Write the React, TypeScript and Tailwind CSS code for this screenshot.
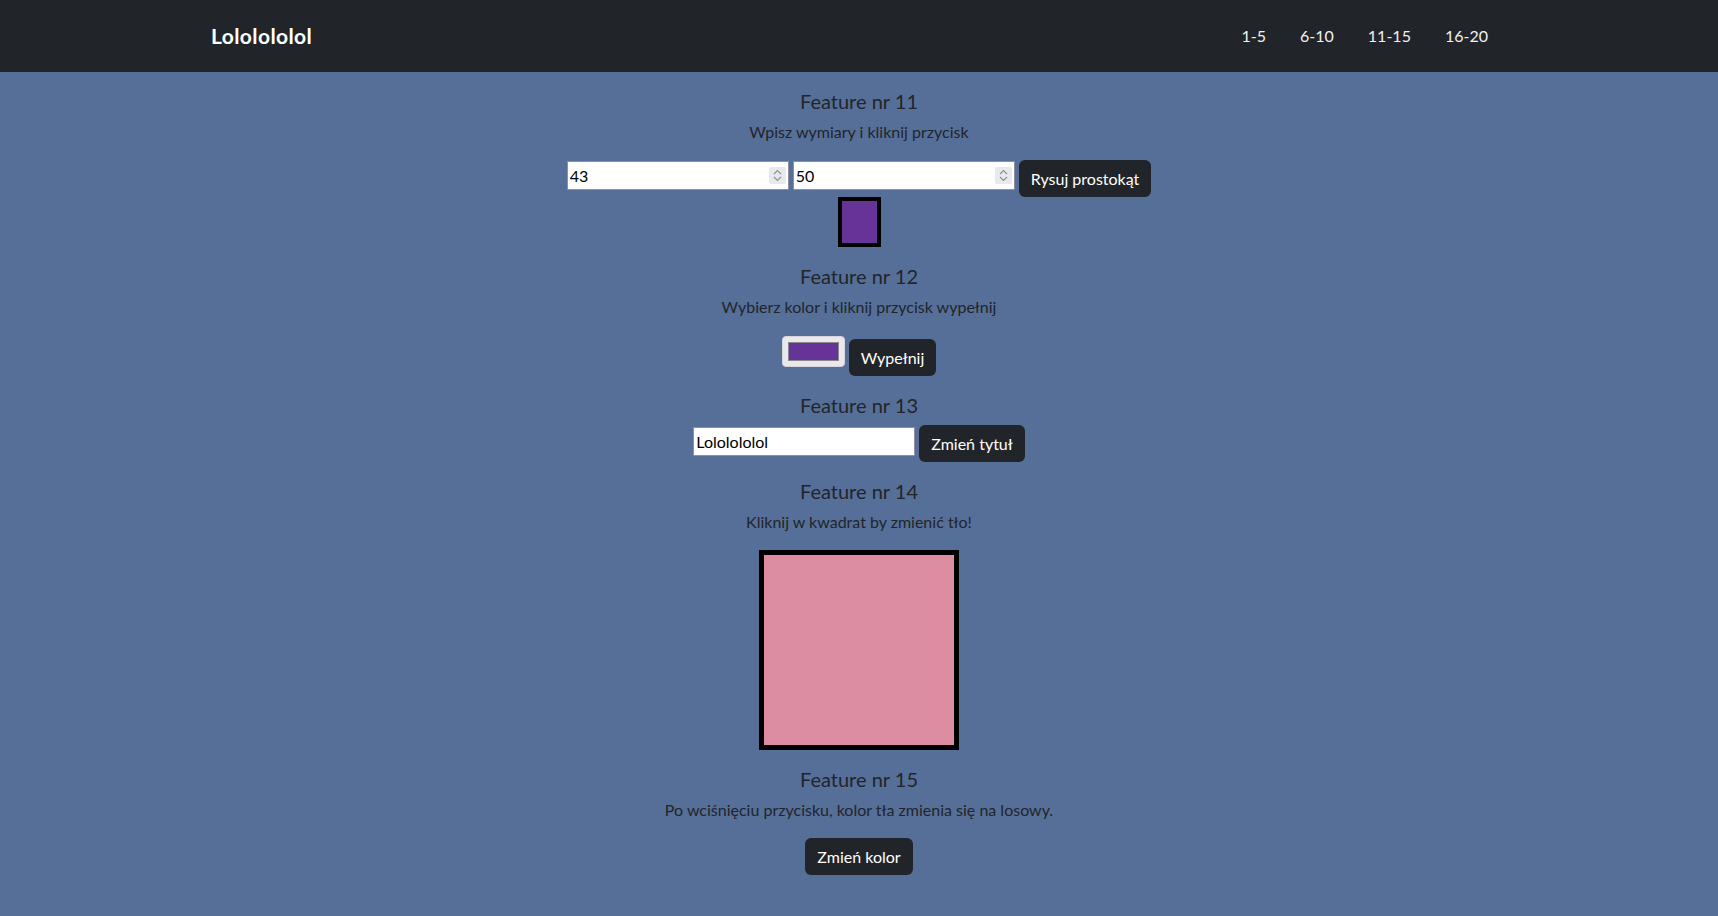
import { useState } from "react";

function Spinner() {
  return (
    <div className="absolute right-[3px] top-[6px] flex h-[17px] w-[17px] flex-col items-center justify-center rounded-[2px] bg-[#e9e9ed]">
      <svg width="9" height="6" viewBox="0 0 9 6" className="mb-[1px]">
        <path d="M1 5 L4.5 1.5 L8 5" fill="none" stroke="#8f8f9d" strokeWidth="1.2" />
      </svg>
      <svg width="9" height="6" viewBox="0 0 9 6">
        <path d="M1 1 L4.5 4.5 L8 1" fill="none" stroke="#8f8f9d" strokeWidth="1.2" />
      </svg>
    </div>
  );
}

function NumberField({ value }: { value: string }) {
  return (
    <div className="relative mt-[1px]">
      <input
        type="text"
        defaultValue={value}
        className="h-[29px] w-[222px] border border-[#8f8f9d] bg-white px-[2px] text-base text-black outline-none"
      />
      <Spinner />
    </div>
  );
}

function DarkButton({ children }: { children: string }) {
  return (
    <button className="flex h-[37px] items-center rounded-[6px] bg-[#212529] px-3 text-base text-white">
      {children}
    </button>
  );
}

function Heading({ children }: { children: string }) {
  return <h5 className="mb-[7px] mt-[17px] text-[20px] leading-6 text-[#212529]">{children}</h5>;
}

function Lead({ children }: { children: string }) {
  return <p className="mb-4 text-base leading-6 text-[#212529]">{children}</p>;
}

export default function App() {
  const [title, setTitle] = useState("Lololololol");

  return (
    <div className="min-h-[916px] bg-[#566f99] font-['Lato',sans-serif]">
      <nav className="h-[72px] bg-[#212529]">
        <div className="mx-auto flex h-full w-[1320px] items-center px-3">
          <span className="text-[21px] font-bold tracking-[0.4px] text-white">{title}</span>
          <div className="ml-auto mr-[19px] flex gap-[34px] text-base text-[#f1f1f2]">
            <a>1-5</a>
            <a>6-10</a>
            <a>11-15</a>
            <a>16-20</a>
          </div>
        </div>
      </nav>

      <main className="flex flex-col items-center text-center">
        <Heading>Feature nr 11</Heading>
        <Lead>Wpisz wymiary i kliknij przycisk</Lead>
        <div className="flex items-start gap-1">
          <NumberField value="43" />
          <NumberField value="50" />
          <DarkButton>Rysuj prostokąt</DarkButton>
        </div>
        <div className="h-[50px] w-[43px] border-4 border-black bg-[#663399]" />

        <Heading>Feature nr 12</Heading>
        <Lead>Wybierz kolor i kliknij przycisk wypełnij</Lead>
        <div className="mt-[4px] flex items-start gap-1">
          <div className="mt-[-3px] flex h-[31px] w-[63px] items-center justify-center rounded-[4px] border border-[#d6d6dc] bg-[#e9e9ed]">
            <div className="h-[19px] w-[51px] border border-[#8a8a8a] bg-[#663399]" />
          </div>
          <DarkButton>Wypełnij</DarkButton>
        </div>

        <Heading>Feature nr 13</Heading>
        <div className="mt-[1px] flex items-start gap-1">
          <input
            type="text"
            value={title}
            onChange={(e) => setTitle(e.target.value)}
            className="mt-[2px] h-[29px] w-[222px] border border-[#8f8f9d] bg-white px-[2px] text-base text-black outline-none"
          />
          <DarkButton>Zmień tytuł</DarkButton>
        </div>

        <Heading>Feature nr 14</Heading>
        <Lead>Kliknij w kwadrat by zmienić tło!</Lead>
        <div className="h-[200px] w-[200px] border-[5px] border-black bg-[#dc8da2]" />

        <Heading>Feature nr 15</Heading>
        <Lead>Po wciśnięciu przycisku, kolor tła zmienia się na losowy.</Lead>
        <DarkButton>Zmień kolor</DarkButton>
      </main>
    </div>
  );
}
